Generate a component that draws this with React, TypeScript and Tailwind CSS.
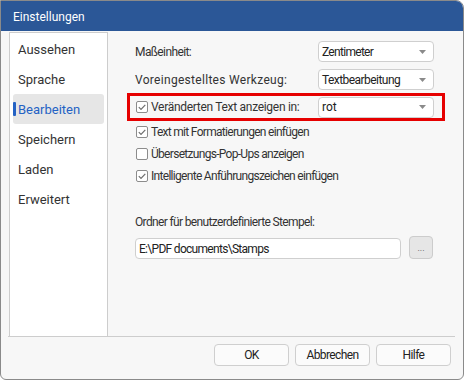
import React from "react";

const font = { fontFamily: '"Segoe UI", Roboto, "Liberation Sans", Arial, sans-serif' };

function Arrow() {
  return (
    <svg width="7" height="4" viewBox="0 0 7 4" className="shrink-0">
      <path d="M0 0 L7 0 L3.5 4 Z" fill="#8a8a8a" />
    </svg>
  );
}

function Select({ value, tight }: { value: string; tight: string }) {
  return (
    <div className="w-[116px] h-[21px] bg-white border border-[#cfcfcf] rounded-[4px] flex items-center justify-between pl-[3px] pr-[7px] text-[12px] text-[#222]">
      <span className={tight}>{value}</span>
      <Arrow />
    </div>
  );
}

function Check({ checked }: { checked: boolean }) {
  return (
    <div className="w-[12px] h-[12px] border border-[#8c8c8c] rounded-[2px] bg-white flex items-center justify-center shrink-0">
      {checked && (
        <svg width="10" height="10" viewBox="0 0 10 10">
          <path d="M1.8 5.2 L4 7.4 L8.3 2.8" fill="none" stroke="#6e6e6e" strokeWidth="1.2" />
        </svg>
      )}
    </div>
  );
}

function CheckRow({ checked, label }: { checked: boolean; label: string }) {
  return (
    <div className="h-[22px] flex items-center gap-[3px] pl-[9px] text-[12px] text-[#333]">
      <Check checked={checked} />
      <span className="tracking-[-0.7px]">{label}</span>
    </div>
  );
}

const navItems = ["Aussehen", "Sprache", "Bearbeiten", "Speichern", "Laden", "Erweitert"];

export default function App() {
  return (
    <div style={font} className="w-[464px] h-[380px] bg-[#f7f7f7] border border-[#8a8a8a] rounded-tr-[8px] rounded-b-[6px] overflow-hidden flex flex-col">
      <div className="h-[30px] bg-[#2b5797] text-white text-[12px] flex items-center pl-[12px] pt-[2px] shrink-0">
        Einstellungen
      </div>
      <div className="flex h-[305px] shrink-0 pl-[8px]">
        <div className="w-[99px] mt-[1px] bg-white border-l border-t border-r border-[#cdcdcd] px-[3px] pt-[1px]">
          {navItems.map((n) => {
            const active = n === "Bearbeiten";
            return (
              <div
                key={n}
                className={`h-[30px] flex items-center relative rounded-[3px] pl-[5px] pt-[1px] text-[13px] ${
                  active ? "bg-[#e6e6e6] text-[#2462c4]" : "text-[#333]"
                }`}
              >
                {active && <div className="absolute left-0 top-[8px] w-[3px] h-[14px] bg-[#2462c4] rounded-[1px]" />}
                {n}
              </div>
            );
          })}
        </div>
        <div className="flex-1 pl-[19px] pt-[10px] text-[12px] text-[#333]">
          <div className="flex items-center h-[21px] pl-[8px]">
            <span className="w-[183px] tracking-[-0.6px]">Maßeinheit:</span>
            <Select value="Zentimeter" tight="tracking-[-0.7px]" />
          </div>
          <div className="flex items-center h-[21px] mt-[7px] pl-[8px]">
            <span className="w-[183px] tracking-[0.3px]">Voreingestelltes Werkzeug:</span>
            <Select value="Textbearbeitung" tight="tracking-[-0.55px]" />
          </div>
          <div className="mt-[3px] w-[318px] h-[28px] border-[3px] border-[#e60000] flex items-center pl-[6px]">
            <div className="flex items-center gap-[3px] w-[182px]">
              <Check checked />
              <span className="tracking-[-0.3px]">Veränderten Text anzeigen in:</span>
            </div>
            <Select value="rot" tight="" />
          </div>
          <CheckRow checked label="Text mit Formatierungen einfügen" />
          <CheckRow checked={false} label="Übersetzungs-Pop-Ups anzeigen" />
          <CheckRow checked label="Intelligente Anführungszeichen einfügen" />
          <div className="mt-[26px] pl-[8px] h-[18px] flex items-center tracking-[-0.65px]">Ordner für benutzerdefinierte Stempel:</div>
          <div className="flex items-end mt-[5px] pl-[8px] gap-[8px]">
            <div className="w-[266px] h-[21px] bg-white border border-[#cfcfcf] rounded-[4px] flex items-center pl-[3px] text-[#222] tracking-[-0.7px]">
              E:\PDF documents\Stamps
            </div>
            <div className="w-[24px] h-[23px] bg-[#e6e6e6] border border-[#cccccc] rounded-[4px] flex items-end justify-center pb-[5px] text-[9px] leading-none text-[#555]">
              ...
            </div>
          </div>
        </div>
      </div>
      <div className="ml-[7px] mr-[8px] border-t border-[#cdcdcd]" />
      <div className="flex justify-end gap-[6px] pr-[12px] pt-[7px]">
        {["OK", "Abbrechen", "Hilfe"].map((b) => (
          <div
            key={b}
            className="w-[75px] h-[22px] bg-[#fbfbfb] border border-[#cfcfcf] rounded-[4px] flex items-center justify-center text-[12px] text-[#222] tracking-[-0.6px]"
          >
            {b}
          </div>
        ))}
      </div>
    </div>
  );
}
